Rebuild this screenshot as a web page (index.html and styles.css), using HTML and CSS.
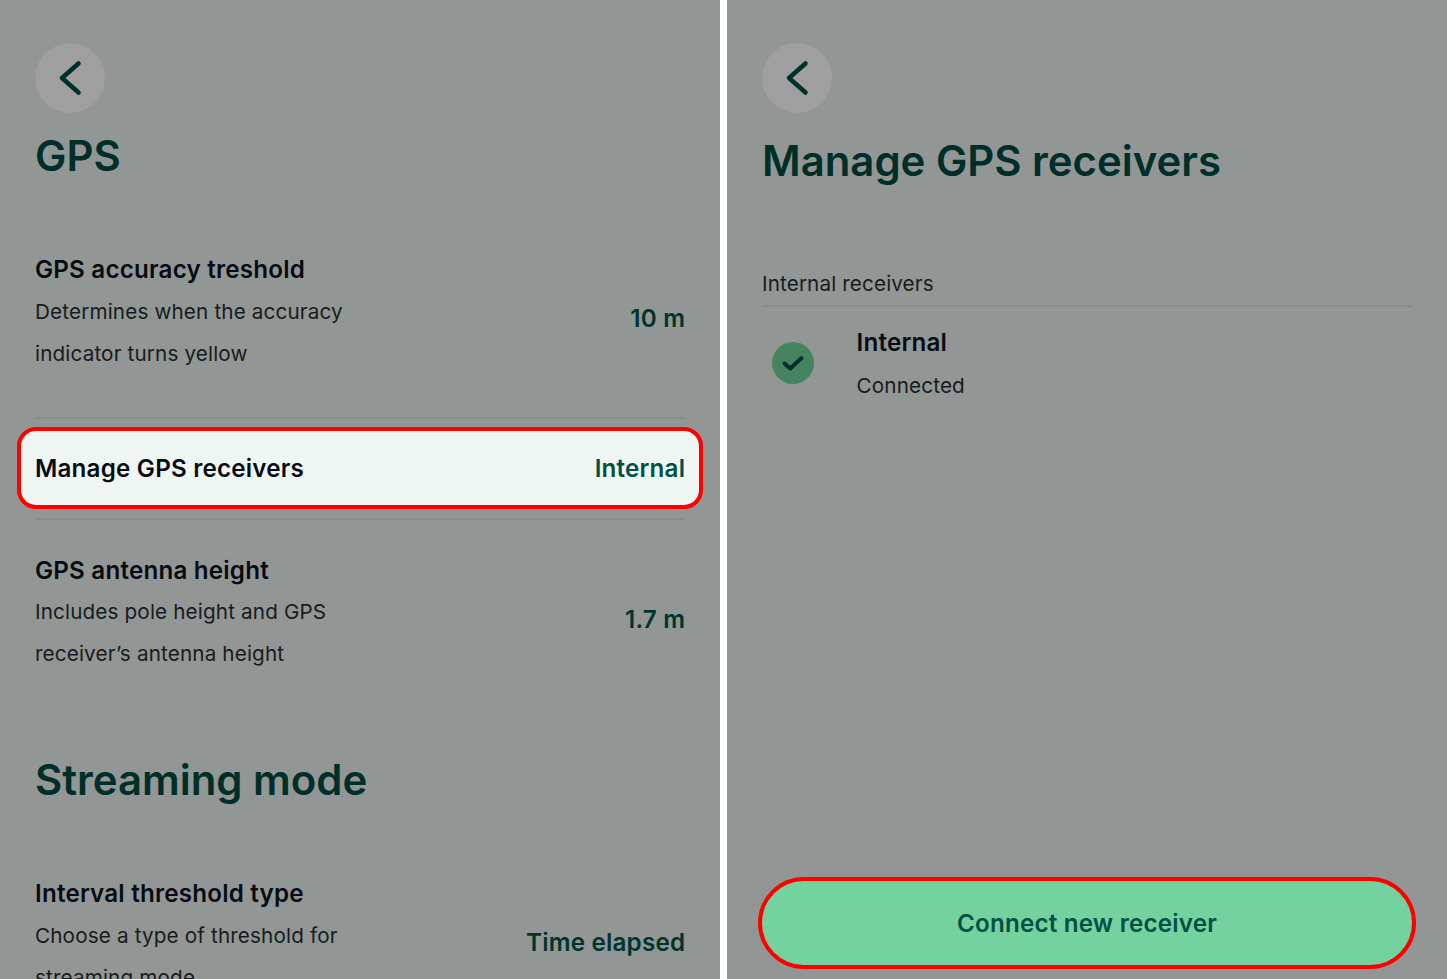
FILE: index.html
```
<!DOCTYPE html>
<html lang="en">
<head>
<meta charset="utf-8">
<title>GPS settings</title>
<link rel="stylesheet" href="styles.css">
</head>
<body>
<main class="screens">
  <section class="screen">
    <button class="back" aria-label="Back"><svg viewBox="0 0 70 70"><path d="M43.500 20.500 27 35 43.500 49.500"/></svg></button>
    <h1 class="title title-gps">GPS</h1>
    <div class="row row-accuracy">
      <div class="info"><h2 class="name">GPS accuracy treshold</h2><p class="desc">Determines when the accuracy<br>indicator turns yellow</p></div>
      <div class="value">10 m</div>
    </div>
    <div class="highlight"><h2 class="name">Manage GPS receivers</h2><div class="value">Internal</div></div>
    <div class="row row-antenna">
      <div class="info"><h2 class="name">GPS antenna height</h2><p class="desc">Includes pole height and GPS<br>receiver’s antenna height</p></div>
      <div class="value">1.7 m</div>
    </div>
    <h1 class="title title-streaming">Streaming mode</h1>
    <div class="row row-interval">
      <div class="info"><h2 class="name">Interval threshold type</h2><p class="desc">Choose a type of threshold for<br>streaming mode</p></div>
      <div class="value">Time elapsed</div>
    </div>
  </section>
  <section class="screen screen-manage">
    <button class="back" aria-label="Back"><svg viewBox="0 0 70 70"><path d="M43.500 20.500 27 35 43.500 49.500"/></svg></button>
    <h1 class="title title-manage">Manage GPS receivers</h1>
    <p class="group">Internal receivers</p>
    <div class="receiver">
      <svg class="check" viewBox="0 0 42 42"><circle cx="21" cy="21" r="21"/><path d="M12.500 21.500 18.300 26.500 29.500 16"/></svg>
      <div><h2 class="name">Internal</h2><p class="desc">Connected</p></div>
    </div>
    <button class="connect">Connect new receiver</button>
  </section>
</main>
</body>
</html>
```
FILE: styles.css
```
* { box-sizing: border-box; margin: 0; padding: 0; }
body { width: 1447px; height: 979px; overflow: hidden; background: #fff; font-family: Inter, sans-serif; color: #070c14; }
button { border: 0; font: inherit; }
.screens { display: grid; grid-template-columns: 720px 720px; gap: 7px; height: 979px; }
.screen { display: flex; flex-direction: column; height: 979px; overflow: hidden; padding: 43px 35px 0; background: #929694; }
.back { flex: none; width: 70px; height: 70px; border-radius: 50%; background: #9f9f9f; }
.back svg { display: block; width: 70px; height: 70px; }
.back path { fill: none; stroke: #00302a; stroke-width: 4.500; stroke-linecap: round; stroke-linejoin: round; }
.title { flex: none; height: 54px; line-height: 54px; font-size: 41.900px; font-weight: 600; color: #002f29; white-space: nowrap; }
.title-gps { margin-top: 16px; }
.row { flex: none; display: flex; justify-content: space-between; white-space: nowrap; }
.row-accuracy { margin-top: 66px; height: 170px; border-bottom: 2px solid #8a8c8b; }
.name { height: 42px; line-height: 42px; font-size: 24.200px; font-weight: 600; letter-spacing: .2px; white-space: nowrap; }
.desc { line-height: 42px; font-size: 20.700px; font-weight: 400; letter-spacing: .14px; color: #171c20; white-space: nowrap; }
.value { margin-right: -.2px; font-size: 24.200px; font-weight: 600; letter-spacing: .2px; line-height: 42px; color: #00352e; }
.row .value { margin-top: 49px; }
.highlight { flex: none; display: flex; justify-content: space-between; align-items: center; height: 82px; margin: 8px -18px; padding: 1px 14px 0; border: 4px solid #f00; border-radius: 19px; background: #eff5f3; }
.highlight .value { color: #005044; }
.row-antenna { height: 206px; margin-top: 1px; padding-top: 30px; border-top: 2px solid #8a8c8b; }
.row-antenna .desc { margin-top: -1px; }
.title-streaming { margin-top: 29px; }
.row-interval { margin-top: 66px; }
.title-manage { margin-top: 21px; }
.group { margin-top: 75px; height: 44px; line-height: 42px; border-bottom: 2px solid #8a8c8b; font-size: 20.700px; font-weight: 400; letter-spacing: .12px; color: #171c20; }
.receiver { display: flex; gap: 42.500px; padding: 15px 10px 0; }
.receiver .name { margin-bottom: 1px; }
.check { width: 42px; height: 42px; margin-top: 20px; }
.check circle { fill: #468460; }
.check path { fill: none; stroke: #00302a; stroke-width: 4; stroke-linecap: round; stroke-linejoin: round; }
.connect { height: 92px; margin: auto -4px 10px; border: 4px solid #f00; border-radius: 46px; background: #73d29e; color: #005044; font-size: 24.200px; font-weight: 600; letter-spacing: .2px; }
```
